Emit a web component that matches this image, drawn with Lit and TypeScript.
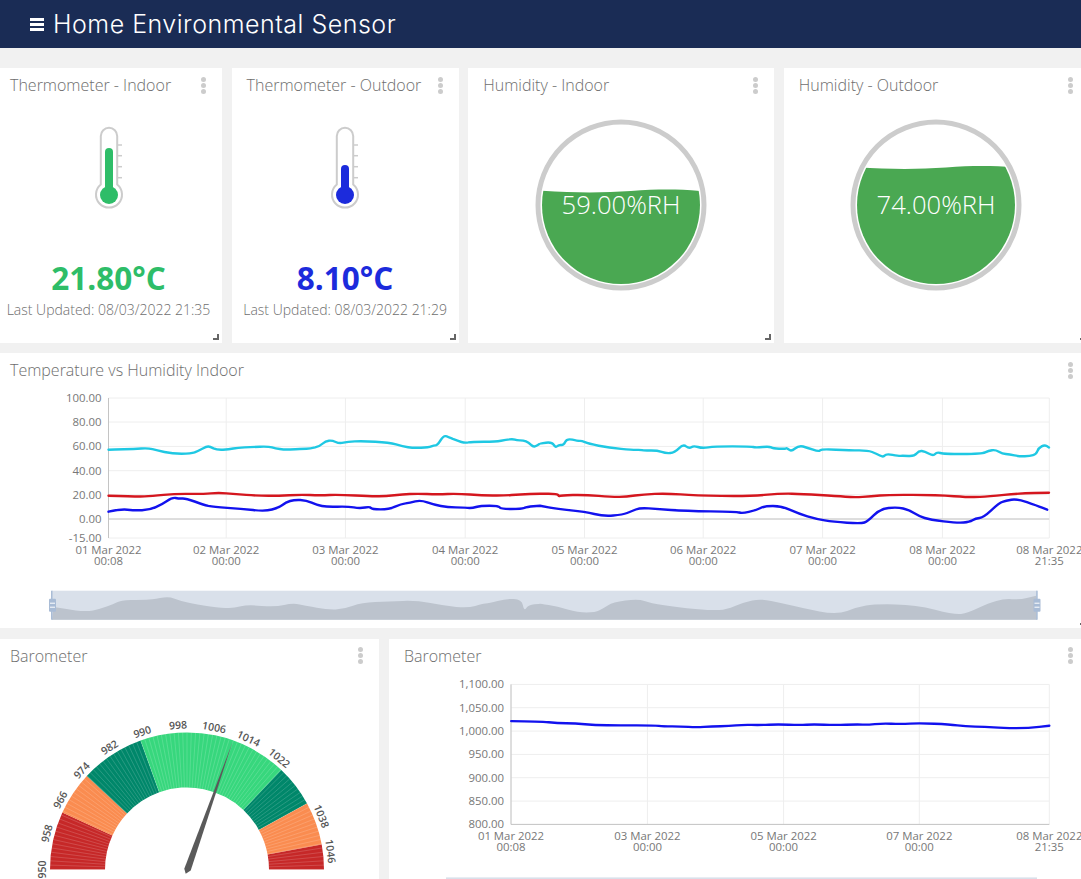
import { LitElement, html, svg, css } from 'lit';
import { customElement, property } from 'lit/decorators.js';

type Pt = [number, number];

// series traced from the reference, in page pixels after toPage()
const toPage = (pts: Pt[], sx: number, ox: number, oy: number): Pt[] =>
  pts.map(([x, y]) => [ox + x / sx, oy + y / 3] as Pt);
const left = (pts: Pt[]) => toPage(pts, 2.904, 0, 380);
const right = (pts: Pt[]) => toPage(pts, 2.898, 540, 380);

// smooth path: quadratic curves through the midpoints
const d = (pts: Pt[]) => {
  let out = `M${pts[0][0].toFixed(1)} ${pts[0][1].toFixed(1)}`;
  for (let i = 1; i < pts.length - 1; i++) {
    const [x, y] = pts[i];
    const mx = (x + pts[i + 1][0]) / 2;
    const my = (y + pts[i + 1][1]) / 2;
    out += `Q${x.toFixed(1)} ${y.toFixed(1)} ${mx.toFixed(1)} ${my.toFixed(1)}`;
  }
  const [lx, ly] = pts[pts.length - 1];
  return `${out}L${lx.toFixed(1)} ${ly.toFixed(1)}`;
};

const CYAN = [
  ...left([[315,210],[330,209],[390,208],[430,205],[455,212],[500,222],[555,222],[575,214],[600,200],[610,201],[630,211],[665,209],[690,204],[730,202],[780,200],[800,206],[825,210],[860,209],[880,207],[900,207],[930,199],[945,184],[965,182],[985,192],[1010,186],[1050,184],[1130,188],[1170,200],[1200,205],[1245,203],[1260,197],[1270,197],[1288,168],[1300,171],[1330,184],[1350,190],[1370,186],[1440,186],[1470,180],[1490,178],[1500,182],[1520,182],[1535,188],[1548,202],[1558,198],[1568,192]]),
  ...right([[0,191],[35,187],[45,204],[55,195],[68,197],[78,176],[110,184],[120,183],[140,192],[200,204],[270,211],[290,210],[300,213],[340,212],[365,221],[390,219],[415,193],[432,207],[445,198],[470,206],[505,200],[610,200],[625,204],[665,200],[675,206],[710,208],[715,204],[728,216],[750,197],[775,204],[808,216],[815,208],[900,212],[950,212],[975,222],[995,233],[1003,222],[1040,229],[1050,228],[1085,230],[1098,213],[1115,215],[1140,229],[1150,217],[1170,223],[1280,223],[1300,213],[1320,210],[1340,222],[1360,224],[1390,230],[1420,229],[1438,224],[1445,205],[1462,195],[1475,203]]),
];
const RED = [
  ...left([[315,348],[400,351],[440,349],[510,342],[590,343],[635,339],[680,343],[750,348],[810,348],[870,345],[930,347],[985,345],[1080,350],[1120,349],[1170,344],[1210,342],[1270,344],[1330,342],[1400,347],[1460,348],[1510,344],[1568,342]]),
  ...right([[0,342],[50,342],[55,350],[60,347],[130,345],[210,352],[250,351],[300,344],[365,341],[450,347],[600,350],[700,341],[760,343],[860,349],[910,353],[960,350],[1010,345],[1150,346],[1250,353],[1300,350],[1390,341],[1475,339]]),
];
const BLUE = [
  ...left([[315,396],[350,388],[390,392],[435,391],[470,374],[500,353],[520,357],[540,356],[590,375],[620,382],[700,387],[770,395],[810,384],[830,368],[855,360],[890,362],[920,376],[950,382],[1010,380],[1045,386],[1075,381],[1080,389],[1130,389],[1165,373],[1190,369],[1222,361],[1260,375],[1300,383],[1345,383],[1370,386],[1395,378],[1448,378],[1454,388],[1515,388],[1530,381],[1568,378]]),
  ...right([[0,378],[50,388],[130,396],[185,410],[240,405],[265,395],[290,384],[340,388],[420,394],[570,396],[585,401],[625,392],[650,379],[700,379],[750,402],[800,418],[850,426],[930,432],[950,425],[985,388],[1035,382],[1070,391],[1100,410],[1130,420],[1210,430],[1245,427],[1262,416],[1285,414],[1330,370],[1350,363],[1382,357],[1440,378],[1470,390]]),
];
const OVERVIEW = [
  ...left([[155,682],[190,688],[250,696],[290,688],[330,673],[350,662],[410,660],[440,660],[490,650],[520,662],[570,675],[650,685],[680,684],[720,675],[800,682],[850,670],[890,678],[950,690],[1000,688],[1050,668],[1130,665],[1210,662],[1290,678],[1360,685],[1400,672],[1420,670],[1470,657],[1515,658],[1522,695],[1535,675],[1568,672]]),
  ...right([[0,672],[50,680],[110,698],[160,698],[185,685],[210,668],[285,657],[320,670],[400,683],[500,692],[540,690],[590,668],[640,657],[700,670],[760,685],[860,705],[920,682],[970,673],[1090,675],[1200,705],[1240,700],[1300,670],[1345,657],[1390,660],[1438,648]]),
];
const BARO = toPage(
  [[275,242],[340,243],[380,248],[420,249],[465,254],[520,255],[600,255],[620,258],[660,258],[695,261],[730,258],[770,257],[800,253],[840,254],[880,252],[930,254],[960,252],[1010,254],[1060,252],[1085,253],[1115,249],[1160,251],[1200,248],[1270,252],[1305,258],[1350,259],[1390,263],[1450,263],[1496,256]],
  2.269, 390, 640,
);

interface Tick { x: number; a: string; b: string }

const TEMP_TICKS: Tick[] = [
  { x: 108.5, a: '01 Mar 2022', b: '00:08' },
  { x: 226.2, a: '02 Mar 2022', b: '00:00' },
  { x: 345.4, a: '03 Mar 2022', b: '00:00' },
  { x: 465.2, a: '04 Mar 2022', b: '00:00' },
  { x: 584.5, a: '05 Mar 2022', b: '00:00' },
  { x: 703.2, a: '06 Mar 2022', b: '00:00' },
  { x: 822.6, a: '07 Mar 2022', b: '00:00' },
  { x: 942.4, a: '08 Mar 2022', b: '00:00' },
  { x: 1049.3, a: '08 Mar 2022', b: '21:35' },
];
const TEMP_YS: [string, number][] = [
  ['100.00', 398.3], ['80.00', 422.3], ['60.00', 446.7], ['40.00', 471],
  ['20.00', 495], ['0.00', 519.3], ['-15.00', 538.3],
];
const BARO_TICKS: Tick[] = [
  { x: 511, a: '01 Mar 2022', b: '00:08' },
  { x: 647.4, a: '03 Mar 2022', b: '00:00' },
  { x: 783.6, a: '05 Mar 2022', b: '00:00' },
  { x: 919.3, a: '07 Mar 2022', b: '00:00' },
  { x: 1049.3, a: '08 Mar 2022', b: '21:35' },
];
const BARO_YS: [string, number][] = [
  ['1,100.00', 684], ['1,050.00', 707.3], ['1,000.00', 730.7], ['950.00', 754],
  ['900.00', 777.3], ['850.00', 800.7], ['800.00', 824],
];

function axes(ticks: Tick[], ys: [string, number][], baseY: number) {
  const x0 = ticks[0].x;
  const x1 = ticks[ticks.length - 1].x;
  const top = ys[0][1];
  const bottom = ys[ys.length - 1][1];
  return svg`
    ${ys.map(([label, y]) => svg`
      <line class="grid" x1=${x0} x2=${x1} y1=${y} y2=${y}></line>
      <text class="tick" x=${x0 - 7} y=${y + 4} text-anchor="end">${label}</text>`)}
    ${ticks.map((t) => svg`
      <line class="grid" x1=${t.x} x2=${t.x} y1=${top} y2=${bottom}></line>
      <text class="tick" text-anchor="middle"><tspan x=${t.x} y=${bottom + 16}>${t.a}</tspan><tspan x=${t.x} y=${bottom + 27}>${t.b}</tspan></text>`)}
    <line class="axis" x1=${x0} x2=${x0} y1=${top} y2=${bottom}></line>
    <line class="axis" x1=${x0} x2=${x1} y1=${baseY} y2=${baseY}></line>`;
}

@customElement('sensor-card')
export class SensorCard extends LitElement {
  static styles = css`
    :host {
      display: block;
      position: relative;
      background: #fff;
      overflow: hidden;
    }
    .head {
      display: flex;
      align-items: center;
      justify-content: space-between;
      height: 34px;
      padding: 0 15px;
      font: 300 16px 'Open Sans', sans-serif;
      color: #6e6e6e;
    }
    .dots {
      display: flex;
      flex-direction: column;
      gap: 1px;
      margin-right: 1px;
    }
    .dots i {
      width: 5px;
      height: 5px;
      border-radius: 50%;
      background: #ccc;
    }
    .grip {
      position: absolute;
      right: 3px;
      bottom: 3px;
      width: 4px;
      height: 4px;
      border-right: 2px solid #666;
      border-bottom: 2px solid #666;
    }
  `;

  @property({ type: String }) label = '';
  @property({ type: Boolean }) grip = false;

  render() {
    return html`
      <div class="head">
        <span>${this.label}</span>
        <span class="dots"><i></i><i></i><i></i></span>
      </div>
      <slot></slot>
      ${this.grip ? html`<span class="grip"></span>` : ''}
    `;
  }
}

@customElement('thermo-panel')
export class ThermoPanel extends LitElement {
  static styles = css`
    :host {
      display: flex;
      flex-direction: column;
      align-items: center;
      font-family: 'Open Sans', sans-serif;
    }
    svg {
      display: block;
      margin-top: 24px;
    }
    .value {
      margin-top: 48px;
      font-size: 31.5px;
      font-weight: 700;
      line-height: 40px;
    }
    .updated {
      margin-top: 2px;
      font-size: 14px;
      font-weight: 300;
      line-height: 20px;
      color: #6e6e6e;
      white-space: nowrap;
    }
  `;

  @property({ type: String }) value = '';
  @property({ type: String }) color = '#000';
  @property({ type: Number }) level = 148;
  @property({ type: String }) stamp = '';

  render() {
    // drawn with y in page pixels, the tube starts at y 127
    return html`
      <svg width="40" height="84" viewBox="89 126 40 84">
        <path
          d="M100.8 184.5V136a8.2 8.2 0 0 1 16.4 0v48.5a13 13 0 1 1 -16.4 0z"
          fill="#fff" stroke="#ccc" stroke-width="2"
        ></path>
        ${[145, 155.7, 166.7, 177.7].map(
          (y) => svg`<line x1="117" x2="122" y1=${y} y2=${y} stroke="#ccc" stroke-width="1.5"></line>`,
        )}
        <circle cx="109" cy="195" r="9" fill=${this.color}></circle>
        <path d="M105 195V${this.level + 4}a4 4 0 0 1 8 0V195z" fill=${this.color}></path>
      </svg>
      <div class="value" style="color:${this.color}">${this.value}</div>
      <div class="updated">Last Updated: ${this.stamp}</div>
    `;
  }
}

@customElement('humidity-panel')
export class HumidityPanel extends LitElement {
  static styles = css`
    :host {
      display: flex;
      justify-content: center;
    }
    svg {
      display: block;
      margin-top: 16px;
    }
    text {
      font: 300 25.6px 'Open Sans', sans-serif;
      fill: #fff;
    }
  `;

  @property({ type: String }) value = '';
  @property({ type: Number }) surface = 0;

  render() {
    const y = this.surface;
    const id = `clip${Math.round(y)}`;
    return html`
      <svg width="180" height="174" viewBox="-90 -87 180 174">
        <defs><clipPath id=${id}><circle r="79"></circle></clipPath></defs>
        <circle r="83" fill="none" stroke="#ccc" stroke-width="5"></circle>
        <path
          clip-path="url(#${id})"
          d="M-90 ${y}C-50 ${y + 3} -20 ${y + 3} 10 ${y + 1}S60 ${y - 1} 90 ${y + 2}V90H-90z"
          fill="#4aa852"
        ></path>
        <text y="9" text-anchor="middle">${this.value}</text>
      </svg>
    `;
  }
}

@customElement('temp-chart')
export class TempChart extends LitElement {
  static styles = css`
    :host { display: block; }
    svg { display: block; }
    .grid { stroke: #eee; stroke-width: 1; }
    .axis { stroke: #c4c4c4; stroke-width: 1; }
    .tick { font: 11.4px 'Open Sans', sans-serif; fill: #777; }
    .series { fill: none; stroke-width: 2.4; stroke-linejoin: round; stroke-linecap: round; }
  `;

  render() {
    const area = `${d(OVERVIEW)}L1036.9 620L52 620z`;
    return html`
      <svg width="1094" height="241" viewBox="-5 387.3 1094 241">
        ${axes(TEMP_TICKS, TEMP_YS, 519.3)}
        <path class="series" d=${d(CYAN)} stroke="#1fc8e3"></path>
        <path class="series" d=${d(RED)} stroke="#d4161e"></path>
        <path class="series" d=${d(BLUE)} stroke="#1212ee"></path>
        <rect x="52" y="591" width="985" height="29" fill="#d9e0ea"></rect>
        <path d=${area} fill="#bcc3cd"></path>
        <rect x="51" y="591" width="1.5" height="29" fill="#a9bcd6"></rect>
        <rect x="1036.2" y="591" width="1.5" height="29" fill="#a9bcd6"></rect>
        ${[49, 1033.5].map((x) => svg`
          <rect x=${x} y="599" width="7" height="13" rx="1" fill="#a9bcd6"></rect>
          <rect x=${x + 1} y="603" width="5" height="1" fill="#fff"></rect>
          <rect x=${x + 1} y="607" width="5" height="1" fill="#fff"></rect>`)}
      </svg>
    `;
  }
}

@customElement('baro-chart')
export class BaroChart extends LitElement {
  static styles = TempChart.styles;

  render() {
    return html`
      <svg width="700" height="207" viewBox="389 672.6 700 207">
        ${axes(BARO_TICKS, BARO_YS, 824)}
        <path class="series" d=${d(BARO)} stroke="#1212ee"></path>
        <rect x="446" y="877" width="591" height="3" fill="#d9e0ea"></rect>
      </svg>
    `;
  }
}

const CX = 187;
const CY = 869;
const R_OUT = 137;
const R_IN = 82;
const polar = (deg: number, r: number): Pt => {
  const a = (deg * Math.PI) / 180;
  return [CX + r * Math.cos(a), CY - r * Math.sin(a)];
};
const SEGMENTS: [number, number, string][] = [
  [180, 155.5, '#c62828'],
  [155.5, 137, '#fa8c50'],
  [137, 109.8, '#00876a'],
  [109.8, 46.5, '#37d77d'],
  [46.5, 28.8, '#00876a'],
  [28.8, 10.5, '#fa8c50'],
  [10.5, 0, '#c62828'],
];
const GAUGE_LABELS = [950, 958, 966, 974, 982, 990, 998, 1006, 1014, 1022, 1038, 1046];

@customElement('baro-gauge')
export class BaroGauge extends LitElement {
  static styles = css`
    :host { display: block; }
    svg { display: block; }
    text { font: 600 10.5px 'Open Sans', sans-serif; fill: #555; }
  `;

  render() {
    const stripes = Array.from({ length: 101 }, (_, i) => i * 1.8);
    return html`
      <svg width="384" height="207" viewBox="-5 672.6 384 207">
        ${SEGMENTS.map(([a, b, color]) => {
          const [x1, y1] = polar(a, R_OUT);
          const [x2, y2] = polar(b, R_OUT);
          const [x3, y3] = polar(b, R_IN);
          const [x4, y4] = polar(a, R_IN);
          return svg`<path fill=${color} d="M${x1} ${y1}A${R_OUT} ${R_OUT} 0 0 1 ${x2} ${y2}L${x3} ${y3}A${R_IN} ${R_IN} 0 0 0 ${x4} ${y4}z"></path>`;
        })}
        ${stripes.map((deg) => {
          const [x1, y1] = polar(deg, R_IN);
          const [x2, y2] = polar(deg, R_OUT);
          return svg`<line x1=${x1} y1=${y1} x2=${x2} y2=${y2} stroke="#fff" stroke-opacity="0.16" stroke-width="1"></line>`;
        })}
        ${GAUGE_LABELS.map((v) => {
          const deg = 180 - (v - 950) * 1.8;
          const [x, y] = polar(deg, 144.5);
          return svg`<text x=${x} y=${y} dy="0.35em" text-anchor="middle" transform="rotate(${90 - deg} ${x} ${y})">${v}</text>`;
        })}
        <path d="M232.6 741.5L184.3 868.3L185.7 873.3L190.7 870z" fill="#5a5a5a"></path>
      </svg>
    `;
  }
}

@customElement('app-root')
export class AppRoot extends LitElement {
  static styles = css`
    :host {
      display: block;
      height: 879px;
      overflow: hidden;
      background: #f1f1f1;
    }
    .bar {
      display: flex;
      align-items: center;
      gap: 9px;
      height: 48px;
      padding-left: 30px;
      background: #1a2c55;
      color: #fff;
    }
    .bar svg {
      display: block;
    }
    .bar h1 {
      margin: 0;
      font: 300 25px Inter, sans-serif;
      letter-spacing: 0.5px;
      white-space: nowrap;
    }
    .rows {
      display: flex;
      flex-direction: column;
      gap: 10.3px;
      width: 1094px;
      margin: 20px 0 0 -5px;
    }
    .top {
      display: grid;
      grid-template-columns: 227px 227px 306px 1fr;
      gap: 9.6px;
      height: 275px;
    }
    .mid {
      height: 275px;
    }
    .low {
      display: grid;
      grid-template-columns: 384px 1fr;
      gap: 10px;
      height: 280px;
    }
  `;

  render() {
    return html`
      <header class="bar">
        <svg width="14" height="13" viewBox="0 0 14 13" fill="#fff">
          <rect width="14" height="3"></rect>
          <rect y="5" width="14" height="3"></rect>
          <rect y="10" width="14" height="3"></rect>
        </svg>
        <h1>Home Environmental Sensor</h1>
      </header>
      <div class="rows">
        <div class="top">
          <sensor-card label="Thermometer - Indoor" grip>
            <thermo-panel value="21.80°C" color="#2ebd68" level="148" stamp="08/03/2022 21:35"></thermo-panel>
          </sensor-card>
          <sensor-card label="Thermometer - Outdoor" grip>
            <thermo-panel value="8.10°C" color="#1c2bdc" level="165" stamp="08/03/2022 21:29"></thermo-panel>
          </sensor-card>
          <sensor-card label="Humidity - Indoor" grip>
            <humidity-panel value="59.00%RH" surface="-15"></humidity-panel>
          </sensor-card>
          <sensor-card label="Humidity - Outdoor" grip>
            <humidity-panel value="74.00%RH" surface="-38.5"></humidity-panel>
          </sensor-card>
        </div>
        <sensor-card class="mid" label="Temperature vs Humidity Indoor" grip>
          <temp-chart></temp-chart>
        </sensor-card>
        <div class="low">
          <sensor-card label="Barometer"><baro-gauge></baro-gauge></sensor-card>
          <sensor-card label="Barometer"><baro-chart></baro-chart></sensor-card>
        </div>
      </div>
    `;
  }
}
